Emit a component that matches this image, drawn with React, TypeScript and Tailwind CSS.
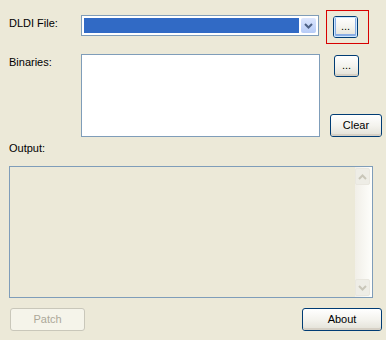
import React from "react";

const XpButton: React.FC<{
  label: string;
  className?: string;
  focused?: boolean;
  disabled?: boolean;
}> = ({ label, className = "", focused, disabled }) => {
  if (disabled) {
    return (
      <div
        className={`flex items-center justify-center rounded-[3px] border border-[#C9C7BA] bg-[#F5F4EA] text-[#ACA899] ${className}`}
      >
        {label}
      </div>
    );
  }
  return (
    <div
      className={`flex items-center justify-center rounded-[3px] border border-[#003C74] bg-gradient-to-b from-[#FFFFFF] via-[#F4F3EE] to-[#E3E1D7] text-black ${className}`}
    >
      <div
        className={`flex h-full w-full items-center justify-center rounded-[2px] ${
          focused
            ? "shadow-[inset_0_0_0_1px_#CEE7FF,inset_0_-1px_0_2px_#89ADE4]"
            : "shadow-[inset_0_-2px_0_0_#D6D0C5]"
        }`}
      >
        <span className="leading-none pb-[1px]">{label}</span>
      </div>
    </div>
  );
};

const Chevron: React.FC<{ up?: boolean; color: string }> = ({ up, color }) => (
  <svg width="9" height="6" viewBox="0 0 9 6" className={up ? "rotate-180" : ""}>
    <path d="M1 1 L4.5 4.5 L8 1" fill="none" stroke={color} strokeWidth="2" />
  </svg>
);

export default function App() {
  return (
    <div
      className="w-[386px] h-[340px] bg-[#ECE9D8] text-[11px] text-black"
      style={{ fontFamily: '"Liberation Sans", Arial, sans-serif' }}
    >
      {/* DLDI file row */}
      <div className="flex pt-[10px]">
        <div className="w-[81px] pl-[9px] pt-[7px] leading-[13px]">DLDI File:</div>
        <div className="mt-[5px] flex h-[21px] w-[238px] border border-[#7F9DB9] bg-white p-[2px]">
          <div className="flex-1 bg-[#316AC5]" />
          <div className="ml-[2px] flex w-[15px] items-center justify-center rounded-[2px] bg-gradient-to-b from-[#DCE6FE] to-[#B6CBF6]">
            <Chevron color="#4D6185" />
          </div>
        </div>
        <div className="ml-[7px] h-[34px] w-[43px] border border-[#D80000] shadow-[inset_0_0_1px_0_#F3C9C0]">
          <XpButton label="..." focused className="ml-[6px] mt-[5px] h-[22px] w-[25px]" />
        </div>
      </div>

      {/* Binaries row */}
      <div className="mt-[10px] flex">
        <div className="w-[81px] pl-[9px] pt-[2px] leading-[13px]">Binaries:</div>
        <div className="h-[83px] w-[239px] border border-[#7F9DB9] bg-white" />
        <div className="ml-[10px] flex h-[83px] flex-col justify-between">
          <XpButton label="..." className="ml-[4px] mt-[1px] h-[22px] w-[25px]" />
          <XpButton label="Clear" className="h-[23px] w-[52px] text-[11px]" />
        </div>
      </div>

      {/* Output */}
      <div className="pl-[9px] pt-[5px] leading-[13px]">Output:</div>
      <div className="ml-[9px] mt-[11px] flex h-[132px] w-[364px] justify-end border border-[#7F9DB9] bg-[#ECE9D8]">
        <div className="flex w-[17px] flex-col justify-between bg-gradient-to-r from-[#F1EFE8] to-[#FEFEFB] py-[1px] pr-[1px]">
          <div className="flex h-[17px] w-[15px] items-center justify-center rounded-[2px] border border-[#E9E7DF] bg-[#EEEDE6]">
            <Chevron up color="#C9C6B9" />
          </div>
          <div className="flex h-[17px] w-[15px] items-center justify-center rounded-[2px] border border-[#E9E7DF] bg-[#EEEDE6]">
            <Chevron color="#C9C6B9" />
          </div>
        </div>
      </div>

      {/* Bottom buttons */}
      <div className="mt-[10px] flex justify-between pl-[10px] pr-[4px]">
        <XpButton label="Patch" disabled className="h-[23px] w-[75px] text-[11px]" />
        <XpButton label="About" className="h-[23px] w-[80px] text-[11px]" />
      </div>
    </div>
  );
}
